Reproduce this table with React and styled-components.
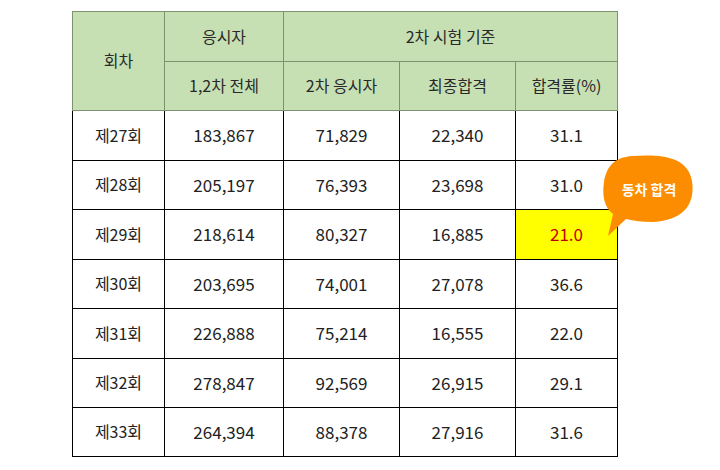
import React from "react";
import styled, { createGlobalStyle } from "styled-components";

const Global = createGlobalStyle`
  html, body { margin: 0; padding: 0; background: #fff; }
  body { font-family: "Noto Sans CJK KR", "Noto Sans", sans-serif; }
`;

const Page = styled.div`
  position: relative;
  width: 720px;
  height: 470px;
  padding: 11px 0 0 72px;
  box-sizing: border-box;
`;

const Table = styled.table`
  border-collapse: collapse;
  table-layout: fixed;
  width: 545px;
  font-size: 16px;
  color: #222;
`;

const HeadCell = styled.th`
  background: #c6e0b4;
  border: 1px solid #7d9370;
  font-weight: 400;
  font-size: 16px;
  color: #2a2a2a;
  height: ${(p) => p.$h}px;
  padding: 0 0 2px;
  text-align: center;
  vertical-align: middle;
  box-sizing: border-box;
`;

const Cell = styled.td`
  border: 1px solid #000;
  height: ${(p) => p.$h}px;
  padding: 0 0 2px;
  text-align: center;
  vertical-align: middle;
  box-sizing: border-box;
  font-size: ${(p) => (p.$num ? 17 : 16)}px;
  background: ${(p) => (p.$hl ? "#ffff00" : "#fff")};
  color: ${(p) => (p.$hl ? "#c00000" : "#222")};
`;

const Bubble = styled.div`
  position: absolute;
  left: 600px;
  top: 153px;
  width: 96px;
  height: 86px;
`;

const BubbleText = styled.span`
  position: absolute;
  left: 0;
  top: 26px;
  width: 98px;
  text-align: center;
  color: #fff;
  font-weight: 700;
  font-size: 14px;
  line-height: 20px;
`;

const rows = [
  ["제27회", "183,867", "71,829", "22,340", "31.1"],
  ["제28회", "205,197", "76,393", "23,698", "31.0"],
  ["제29회", "218,614", "80,327", "16,885", "21.0"],
  ["제30회", "203,695", "74,001", "27,078", "36.6"],
  ["제31회", "226,888", "75,214", "16,555", "22.0"],
  ["제32회", "278,847", "92,569", "26,915", "29.1"],
  ["제33회", "264,394", "88,378", "27,916", "31.6"],
];
const heights = [50, 49, 50, 49, 50, 49, 49];

export default function App() {
  return (
    <Page>
      <Global />
      <Table>
        <colgroup>
          <col style={{ width: 92 }} />
          <col style={{ width: 119 }} />
          <col style={{ width: 116 }} />
          <col style={{ width: 116 }} />
          <col style={{ width: 102 }} />
        </colgroup>
        <thead>
          <tr>
            <HeadCell $h={50} rowSpan={2}>회차</HeadCell>
            <HeadCell $h={50}>응시자</HeadCell>
            <HeadCell $h={50} colSpan={3}>2차 시험 기준</HeadCell>
          </tr>
          <tr>
            <HeadCell $h={49}>1,2차 전체</HeadCell>
            <HeadCell $h={49}>2차 응시자</HeadCell>
            <HeadCell $h={49}>최종합격</HeadCell>
            <HeadCell $h={49}>합격률(%)</HeadCell>
          </tr>
        </thead>
        <tbody>
          {rows.map((r, i) => (
            <tr key={r[0]}>
              {r.map((c, j) => (
                <Cell
                  key={j}
                  $h={heights[i]}
                  $num={j > 0}
                  $hl={i === 2 && j === 4}
                >
                  {c}
                </Cell>
              ))}
            </tr>
          ))}
        </tbody>
      </Table>
      <Bubble>
        <svg width="96" height="86" viewBox="0 0 96 86">
          <path
            d="M32 3 C60 1 88 3 92 28 C96 54 80 68 52 69 C42 69 34 68 26 66 L8 83 L13 61 C4 54 2 42 4 29 C7 10 18 4 32 3 Z"
            fill="#fd8d00"
          />
        </svg>
        <BubbleText>동차 합격</BubbleText>
      </Bubble>
    </Page>
  );
}
